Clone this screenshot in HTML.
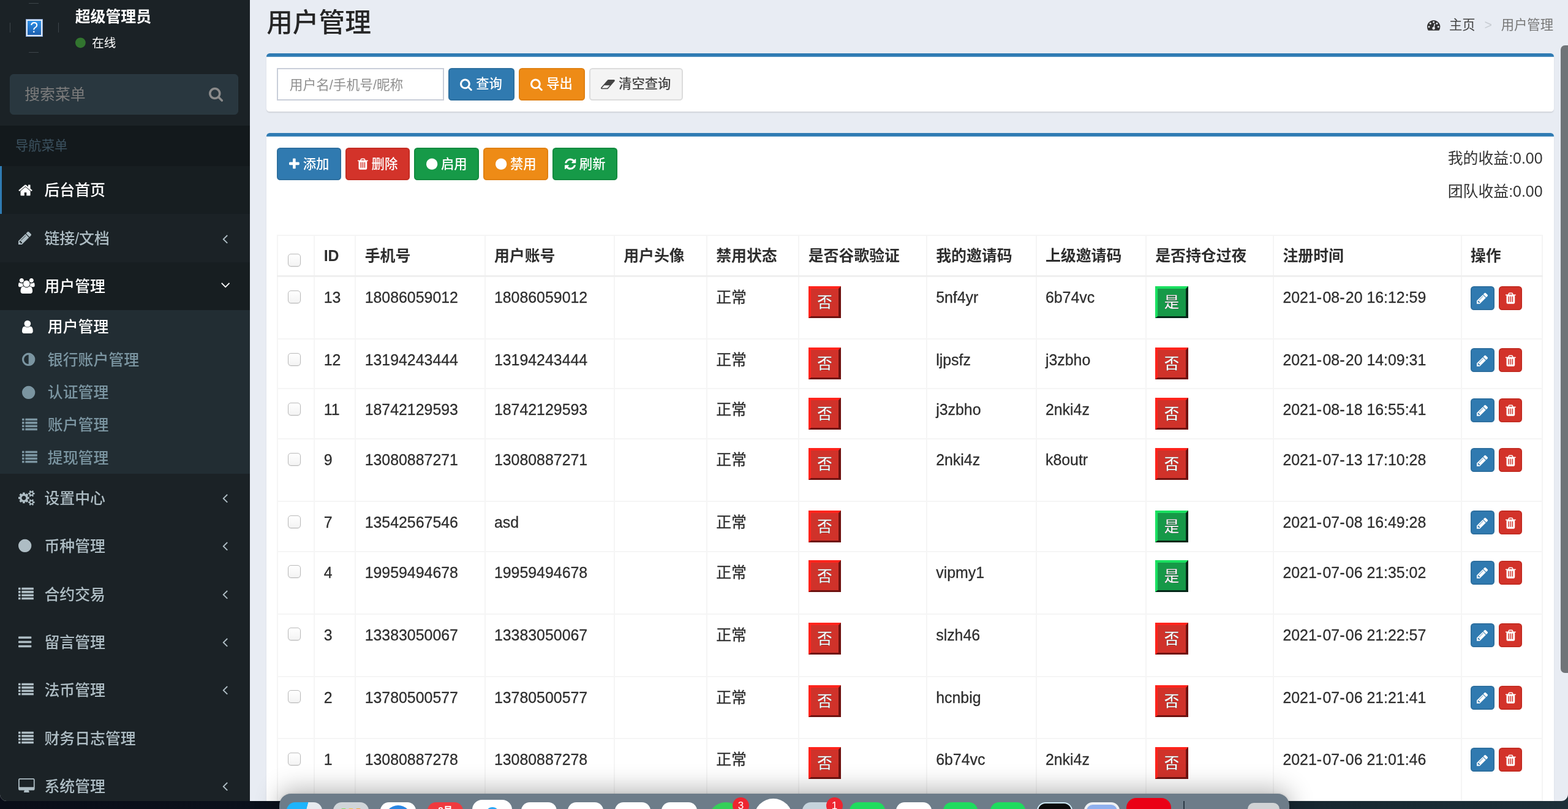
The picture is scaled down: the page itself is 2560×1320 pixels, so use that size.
<!DOCTYPE html>
<html lang="zh-CN"><head><meta charset="utf-8"><title>用户管理</title>
<style>
*{box-sizing:border-box}
html,body{margin:0;padding:0}
body{width:2560px;height:1320px;overflow:hidden;position:relative;background:linear-gradient(90deg,#090d18 0,#0b111c 18%,#16252e 80%,#1d3039 100%);font-family:"Liberation Sans","Noto Sans CJK SC",sans-serif;font-size:24.89px;line-height:35.56px;color:#333}
svg.fa{display:inline-block;fill:currentColor;overflow:visible}
ul{list-style:none;margin:0;padding:0}
a{text-decoration:none;color:inherit}
#win{will-change:transform;position:absolute;left:0;top:0;width:2560px;height:1307px;overflow:hidden;border-radius:0 0 11px 11px;background:#e8ecf3}
/* ---------- sidebar ---------- */
#sb{position:absolute;left:-1.7px;top:-12.2px;width:409.7px;height:1400px;background:#1b2226;color:#aebdc4}
.up{position:relative;height:115.56px}
.up .frag{position:absolute;background:#3d454a}
.up .qm{position:absolute;left:43.4px;top:43.3px;width:28px;height:29px;border:3px solid #dfe8f4;outline:1px solid #7f9fd0;outline-offset:-1px;background:linear-gradient(#2c8fe6,#1c5fb0);color:#fff;font:normal 23px/23px "Liberation Sans",sans-serif;text-align:center}
.up .nm{position:absolute;left:124.44px;top:27.4px;font-weight:700;font-size:24.89px;line-height:24.89px;color:#fff;white-space:nowrap}
.up .st{position:absolute;left:124.44px;top:71.9px;font-size:19.56px;line-height:19.56px;color:#fff;white-space:nowrap}
.up .st svg{fill:#32752f;margin-right:5.33px}
.sf{position:absolute;left:17.78px;top:133.33px;width:373.33px;height:65.78px;border-radius:6.04px;background:#29373f;border:1.78px solid #2b3a42}
.sf .ph{position:absolute;left:23.11px;top:15.1px;font-size:24.89px;line-height:35.56px;color:#7c7c7c}
.sf svg{position:absolute;right:24.00px;top:18.67px;fill:#8b8b8b}
.nh{position:absolute;left:0;top:217.00px;width:100%;height:66.03px;background:#13191c;color:#3c5260;font-size:21.33px;line-height:30.47px;padding:17.78px 44.44px 17.78px 26.67px}
.menu{position:absolute;left:0;top:283.02px;width:100%}
.menu>li>a{display:block;position:relative;height:78.35px;padding:21.33px 8.89px 21.33px 26.67px;border-left:5.33px solid transparent;font-size:24.89px;line-height:35.56px;white-space:nowrap}
.menu>li>a .ic{display:inline-block;width:35.56px}
.menu>li>a .ar{position:absolute;right:36.09px;top:27.38px;line-height:24.89px}
.menu>li>a .ar.dn{transform:rotate(-90deg);top:25.96px}
.menu .t{position:relative;top:2.0px;font-weight:500}
.menu .ic{position:relative;top:1.6px}
.menu>li.act>a{background:#171e21;color:#fff;border-left-color:#2f7bb3}
.menu>li.open>a{background:#171e21;color:#fff}
.menu .sub{background:#222d33;padding-left:8.89px}
.menu .sub a{display:block;height:53.33px;padding:8.89px 8.89px 8.89px 28.2px;font-size:24.89px;line-height:35.56px;color:#7b95a1;white-space:nowrap}
.menu>li:nth-child(-n+3)>a>.t{top:1.3px}
.menu>li:nth-child(-n+3)>a>.ic{top:0.8px}
.menu .sub a .ic{display:inline-block;width:35.56px;left:0.8px}
.menu .sub .t{top:1.5px}
.menu .sub li.act a{color:#fff}
/* ---------- main ---------- */
#main{position:absolute;left:0;top:0;width:2560px;height:1320px}
h1{position:absolute;left:435.2px;top:14.33px;margin:0;font-size:42.67px;line-height:46.93px;font-weight:500;color:#262626;white-space:nowrap}
.bc{position:absolute;right:24px;top:24.4px;font-size:21.33px;line-height:35.56px;color:#777;white-space:nowrap}
.bc .h{color:#444}
.bc .sep{color:#c8cdd3;padding:0 8.89px}
.bc svg{fill:#333}
.box{position:absolute;left:434.6px;width:2102.7px;background:linear-gradient(#2f7bb3 0,#2f7bb3 5.3px,#fff 6.1px);padding-top:5.33px;border-radius:5.33px;box-shadow:0 1.78px 1.78px rgba(0,0,0,.1)}
#b1{top:87.4px;height:94.4px}
#b2{top:217.4px;height:1200px}
.bb{padding:17.9px 17.78px 17.78px 17.78px;white-space:nowrap}
.inp{display:inline-block;vertical-align:middle;width:272.6px;height:53.3px;border:2px solid #c9ced9;padding:9.9px 0 0 18.4px;font-size:21.69px;line-height:32.00px;color:#8f8f8f;background:#fff;white-space:nowrap}
.btn{display:inline-block;vertical-align:middle;overflow:visible;border:2px solid transparent;border-radius:5.33px;color:#fff;text-align:center;white-space:nowrap}
.btn.sm{height:53px;padding:8.2px 0 0 17.6px;font-size:21.33px;line-height:32.00px;text-align:left}
.btn .t{position:relative;top:0.3px;font-weight:500}
.btn svg{position:relative;top:1.2px}
.btn.xs{height:39px;padding:1.6px 0 0 0;font-size:21.33px;line-height:32.00px;text-align:center}
.btn.primary{background:#307ab0;border-color:#2d6f9f}
.btn.warning{background:#ee8b16;border-color:#e08012}
.btn.danger{background:#d3332a;border-color:#c42c22}
.btn.success{background:#169a48;border-color:#128a3f}
.btn.default{background:#f4f4f4;border-color:#dcdcdc;color:#444}
.tb{position:absolute;left:17.78px;top:23.7px;white-space:nowrap}
.inc{position:absolute;right:18.8px;top:23.9px;text-align:right;font-size:24.89px;line-height:35.56px;color:#333}
.inc p{margin:0 0 18px}
table{position:absolute;left:17.9px;top:166px;border-collapse:collapse;table-layout:fixed;width:2067px}
th,td{border:2px solid #f5f5f5;padding:0 14.22px;vertical-align:top;text-align:left;font-size:24.89px;line-height:35.56px;white-space:nowrap;overflow:hidden}
th{font-weight:700;color:#2e2e2e;padding-top:14.9px}
thead tr{height:66.5px}
thead th{border-bottom:3px solid #efefef}
td{padding-top:16.0px;color:#2e2e2e;-webkit-text-stroke:0.3px #2e2e2e}
tr.rt{height:102px}
tr.rs{height:81.6px}
tr.rt2{height:101.2px}
.cb{display:inline-block;width:21px;height:21px;border:1.5px solid #b9b9b9;border-radius:5px;background:linear-gradient(#fff,#f3f3f3);vertical-align:top;margin:5.7px 0 0 0.8px;box-shadow:0 1px 1px rgba(0,0,0,.08)}
.nb{display:inline-block;vertical-align:top;width:53.4px;height:52px;margin:-2.5px 0 0 0;padding:0;border-style:solid;border-width:4px 4px 3px 4px;font:inherit;font-weight:500;font-size:24.89px;line-height:41px;color:#fff;text-align:center}
.nb.no{background:#d0322a;border-color:#ff241c #6e1210 #6e1210 #ff241c}
.nb.yes{background:#169948;border-color:#1ae060 #042818 #042818 #1ae060}
td.op{padding-top:14.2px}
th .cb{margin-top:13.4px}
tbody tr:first-child td{padding-top:15.5px}
tbody tr:first-child td.op{padding-top:14.4px}
tbody tr:first-child .nb{margin-top:-1.4px}
tbody tr:first-child .cb{margin-top:5.7px}
.hy{letter-spacing:1.4px}
/* ---------- scroll bar + dock ---------- */
#scr{position:absolute;left:2548px;top:74px;width:14px;height:1024px;border-radius:7px 0 0 7px;background:#707478}
#glow{display:none}
#dock{position:absolute;left:456px;top:1295px;width:1649px;height:60px;border-radius:19px;background:#6d7c89;box-shadow:0 -6px 40px rgba(0,0,0,.30),0 0 5px rgba(0,0,0,.12)}
#dock i{position:absolute;display:block;border-radius:14px 14px 0 0}
#dock b{position:absolute;display:block;width:27px;height:27px;border-radius:50%;background:#ee2530;color:#fff;font:normal 17px/27px "Liberation Sans",sans-serif;text-align:center}

</style></head>
<body>
<div id="win">
<div id="main">
  <h1>用户管理</h1>
  <div class="bc"><svg class="fa" style="width:21.33px;height:21.33px;vertical-align:-3.05px;" viewBox="0 -1536 1792 1792" aria-hidden="true"><path transform="scale(1,-1)" d="M384 384q0 53 -37.5 90.5t-90.5 37.5t-90.5 -37.5t-37.5 -90.5t37.5 -90.5t90.5 -37.5t90.5 37.5t37.5 90.5zM576 832q0 53 -37.5 90.5t-90.5 37.5t-90.5 -37.5t-37.5 -90.5t37.5 -90.5t90.5 -37.5t90.5 37.5t37.5 90.5zM1004 351l101 382q6 26 -7.5 48.5t-38.5 29.5 t-48 -6.5t-30 -39.5l-101 -382q-60 -5 -107 -43.5t-63 -98.5q-20 -77 20 -146t117 -89t146 20t89 117q16 60 -6 117t-72 91zM1664 384q0 53 -37.5 90.5t-90.5 37.5t-90.5 -37.5t-37.5 -90.5t37.5 -90.5t90.5 -37.5t90.5 37.5t37.5 90.5zM1024 1024q0 53 -37.5 90.5 t-90.5 37.5t-90.5 -37.5t-37.5 -90.5t37.5 -90.5t90.5 -37.5t90.5 37.5t37.5 90.5zM1472 832q0 53 -37.5 90.5t-90.5 37.5t-90.5 -37.5t-37.5 -90.5t37.5 -90.5t90.5 -37.5t90.5 37.5t37.5 90.5zM1792 384q0 -261 -141 -483q-19 -29 -54 -29h-1402q-35 0 -54 29 q-141 221 -141 483q0 182 71 348t191 286t286 191t348 71t348 -71t286 -191t191 -286t71 -348z"/></svg><span class="h" style="margin-left:14.22px">主页</span> <span class="sep">&gt;&nbsp;</span>用户管理</div>
  <div class="box" id="b1"><div class="bb">
    <span class="inp">用户名/手机号/昵称</span>
    <a class="btn sm primary" style="width:108px"><svg class="fa" style="width:19.81px;height:21.33px;vertical-align:-3.05px;" viewBox="0 -1536 1664 1792" aria-hidden="true"><path transform="scale(1,-1)" d="M1152 704q0 185 -131.5 316.5t-316.5 131.5t-316.5 -131.5t-131.5 -316.5t131.5 -316.5t316.5 -131.5t316.5 131.5t131.5 316.5zM1664 -128q0 -52 -38 -90t-90 -38q-54 0 -90 38l-343 342q-179 -124 -399 -124q-143 0 -273.5 55.5t-225 150t-150 225t-55.5 273.5 t55.5 273.5t150 225t225 150t273.5 55.5t273.5 -55.5t225 -150t150 -225t55.5 -273.5q0 -220 -124 -399l343 -343q37 -37 37 -90z"/></svg> <span class="t">查询</span></a>
    <a class="btn sm warning" style="width:108px"><svg class="fa" style="width:19.81px;height:21.33px;vertical-align:-3.05px;" viewBox="0 -1536 1664 1792" aria-hidden="true"><path transform="scale(1,-1)" d="M1152 704q0 185 -131.5 316.5t-316.5 131.5t-316.5 -131.5t-131.5 -316.5t131.5 -316.5t316.5 -131.5t316.5 131.5t131.5 316.5zM1664 -128q0 -52 -38 -90t-90 -38q-54 0 -90 38l-343 342q-179 -124 -399 -124q-143 0 -273.5 55.5t-225 150t-150 225t-55.5 273.5 t55.5 273.5t150 225t225 150t273.5 55.5t273.5 -55.5t225 -150t150 -225t55.5 -273.5q0 -220 -124 -399l343 -343q37 -37 37 -90z"/></svg> <span class="t">导出</span></a>
    <a class="btn sm default" style="width:153.3px"><svg class="fa" style="width:22.86px;height:21.33px;vertical-align:-3.05px;" viewBox="0 -1536 1920 1792" aria-hidden="true"><path transform="scale(1,-1)" d="M896 128l336 384h-768l-336 -384h768zM1909 1205q15 -34 9.5 -71.5t-30.5 -65.5l-896 -1024q-38 -44 -96 -44h-768q-38 0 -69.5 20.5t-47.5 54.5q-15 34 -9.5 71.5t30.5 65.5l896 1024q38 44 96 44h768q38 0 69.5 -20.5t47.5 -54.5z"/></svg> <span class="t">清空查询</span></a>
  </div></div>
  <div class="box" id="b2">
    <div class="tb">
    <a class="btn sm primary" style="width:105px"><svg class="fa" style="width:16.76px;height:21.33px;vertical-align:-3.05px;" viewBox="0 -1536 1408 1792" aria-hidden="true"><path transform="scale(1,-1)" d="M1408 800v-192q0 -40 -28 -68t-68 -28h-416v-416q0 -40 -28 -68t-68 -28h-192q-40 0 -68 28t-28 68v416h-416q-40 0 -68 28t-28 68v192q0 40 28 68t68 28h416v416q0 40 28 68t68 28h192q40 0 68 -28t28 -68v-416h416q40 0 68 -28t28 -68z"/></svg> <span class="t">添加</span></a>
    <a class="btn sm danger" style="width:105px"><svg class="fa" style="width:16.76px;height:21.33px;vertical-align:-3.05px;" viewBox="0 -1536 1408 1792" aria-hidden="true"><path transform="scale(1,-1)" d="M512 160v704q0 14 -9 23t-23 9h-64q-14 0 -23 -9t-9 -23v-704q0 -14 9 -23t23 -9h64q14 0 23 9t9 23zM768 160v704q0 14 -9 23t-23 9h-64q-14 0 -23 -9t-9 -23v-704q0 -14 9 -23t23 -9h64q14 0 23 9t9 23zM1024 160v704q0 14 -9 23t-23 9h-64q-14 0 -23 -9t-9 -23v-704 q0 -14 9 -23t23 -9h64q14 0 23 9t9 23zM480 1152h448l-48 117q-7 9 -17 11h-317q-10 -2 -17 -11zM1408 1120v-64q0 -14 -9 -23t-23 -9h-96v-948q0 -83 -47 -143.5t-113 -60.5h-832q-66 0 -113 58.5t-47 141.5v952h-96q-14 0 -23 9t-9 23v64q0 14 9 23t23 9h309l70 167 q15 37 54 63t79 26h320q40 0 79 -26t54 -63l70 -167h309q14 0 23 -9t9 -23z"/></svg> <span class="t">删除</span></a>
    <a class="btn sm success" style="width:106px"><svg class="fa" style="width:18.29px;height:21.33px;vertical-align:-3.05px;" viewBox="0 -1536 1536 1792" aria-hidden="true"><path transform="scale(1,-1)" d="M1536 640q0 -209 -103 -385.5t-279.5 -279.5t-385.5 -103t-385.5 103t-279.5 279.5t-103 385.5t103 385.5t279.5 279.5t385.5 103t385.5 -103t279.5 -279.5t103 -385.5z"/></svg> <span class="t">启用</span></a>
    <a class="btn sm warning" style="width:106px"><svg class="fa" style="width:18.29px;height:21.33px;vertical-align:-3.05px;" viewBox="0 -1536 1536 1792" aria-hidden="true"><path transform="scale(1,-1)" d="M1536 640q0 -209 -103 -385.5t-279.5 -279.5t-385.5 -103t-385.5 103t-279.5 279.5t-103 385.5t103 385.5t279.5 279.5t385.5 103t385.5 -103t279.5 -279.5t103 -385.5z"/></svg> <span class="t">禁用</span></a>
    <a class="btn sm success" style="width:105.6px"><svg class="fa" style="width:18.29px;height:21.33px;vertical-align:-3.05px;" viewBox="0 -1536 1536 1792" aria-hidden="true"><path transform="scale(1,-1)" d="M1511 480q0 -5 -1 -7q-64 -268 -268 -434.5t-478 -166.5q-146 0 -282.5 55t-243.5 157l-129 -129q-19 -19 -45 -19t-45 19t-19 45v448q0 26 19 45t45 19h448q26 0 45 -19t19 -45t-19 -45l-137 -137q71 -66 161 -102t187 -36q134 0 250 65t186 179q11 17 53 117 q8 23 30 23h192q13 0 22.5 -9.5t9.5 -22.5zM1536 1280v-448q0 -26 -19 -45t-45 -19h-448q-26 0 -45 19t-19 45t19 45l138 138q-148 137 -349 137q-134 0 -250 -65t-186 -179q-11 -17 -53 -117q-8 -23 -30 -23h-199q-13 0 -22.5 9.5t-9.5 22.5v7q65 268 270 434.5t480 166.5 q146 0 284 -55.5t245 -156.5l130 129q19 19 45 19t45 -19t19 -45z"/></svg> <span class="t">刷新</span></a>
    </div>
    <div class="inc"><p>我的收益:0.00</p><p>团队收益:0.00</p></div>
    <table>
      <colgroup><col style="width:60px"><col style="width:67px"><col style="width:211.25px"><col style="width:211.25px"><col style="width:151px"><col style="width:150.5px"><col style="width:208.5px"><col style="width:178.75px"><col style="width:179.25px"><col style="width:208.25px"><col style="width:306.5px"><col style="width:132.75px"></colgroup>
      <thead><tr><th><span class="cb"></span></th><th>ID</th><th>手机号</th><th>用户账号</th><th>用户头像</th><th>禁用状态</th><th>是否谷歌验证</th><th>我的邀请码</th><th>上级邀请码</th><th>是否持仓过夜</th><th>注册时间</th><th>操作</th></tr></thead>
      <tbody>
<tr class="rt"><td><span class="cb"></span></td><td>13</td><td>18086059012</td><td>18086059012</td><td></td><td>正常</td><td><button class="nb no">否</button></td><td>5nf4yr</td><td>6b74vc</td><td><button class="nb yes">是</button></td><td>2021<span class="hy">-</span>08<span class="hy">-</span>20 16:12:59</td><td class="op"><a class="btn xs primary" style="width:39.2px"><svg class="fa" style="width:18.29px;height:21.33px;vertical-align:-3.05px;" viewBox="0 -1536 1536 1792" aria-hidden="true"><path transform="scale(1,-1)" d="M363 0l91 91l-235 235l-91 -91v-107h128v-128h107zM886 928q0 22 -22 22q-10 0 -17 -7l-542 -542q-7 -7 -7 -17q0 -22 22 -22q10 0 17 7l542 542q7 7 7 17zM832 1120l416 -416l-832 -832h-416v416zM1515 1024q0 -53 -37 -90l-166 -166l-416 416l166 165q36 38 90 38 q53 0 91 -38l235 -234q37 -39 37 -91z"/></svg></a> <a class="btn xs danger" style="width:38.2px"><svg class="fa" style="width:16.76px;height:21.33px;vertical-align:-3.05px;" viewBox="0 -1536 1408 1792" aria-hidden="true"><path transform="scale(1,-1)" d="M512 160v704q0 14 -9 23t-23 9h-64q-14 0 -23 -9t-9 -23v-704q0 -14 9 -23t23 -9h64q14 0 23 9t9 23zM768 160v704q0 14 -9 23t-23 9h-64q-14 0 -23 -9t-9 -23v-704q0 -14 9 -23t23 -9h64q14 0 23 9t9 23zM1024 160v704q0 14 -9 23t-23 9h-64q-14 0 -23 -9t-9 -23v-704 q0 -14 9 -23t23 -9h64q14 0 23 9t9 23zM480 1152h448l-48 117q-7 9 -17 11h-317q-10 -2 -17 -11zM1408 1120v-64q0 -14 -9 -23t-23 -9h-96v-948q0 -83 -47 -143.5t-113 -60.5h-832q-66 0 -113 58.5t-47 141.5v952h-96q-14 0 -23 9t-9 23v64q0 14 9 23t23 9h309l70 167 q15 37 54 63t79 26h320q40 0 79 -26t54 -63l70 -167h309q14 0 23 -9t9 -23z"/></svg></a></td></tr>
<tr class="rs"><td><span class="cb"></span></td><td>12</td><td>13194243444</td><td>13194243444</td><td></td><td>正常</td><td><button class="nb no">否</button></td><td>ljpsfz</td><td>j3zbho</td><td><button class="nb no">否</button></td><td>2021<span class="hy">-</span>08<span class="hy">-</span>20 14:09:31</td><td class="op"><a class="btn xs primary" style="width:39.2px"><svg class="fa" style="width:18.29px;height:21.33px;vertical-align:-3.05px;" viewBox="0 -1536 1536 1792" aria-hidden="true"><path transform="scale(1,-1)" d="M363 0l91 91l-235 235l-91 -91v-107h128v-128h107zM886 928q0 22 -22 22q-10 0 -17 -7l-542 -542q-7 -7 -7 -17q0 -22 22 -22q10 0 17 7l542 542q7 7 7 17zM832 1120l416 -416l-832 -832h-416v416zM1515 1024q0 -53 -37 -90l-166 -166l-416 416l166 165q36 38 90 38 q53 0 91 -38l235 -234q37 -39 37 -91z"/></svg></a> <a class="btn xs danger" style="width:38.2px"><svg class="fa" style="width:16.76px;height:21.33px;vertical-align:-3.05px;" viewBox="0 -1536 1408 1792" aria-hidden="true"><path transform="scale(1,-1)" d="M512 160v704q0 14 -9 23t-23 9h-64q-14 0 -23 -9t-9 -23v-704q0 -14 9 -23t23 -9h64q14 0 23 9t9 23zM768 160v704q0 14 -9 23t-23 9h-64q-14 0 -23 -9t-9 -23v-704q0 -14 9 -23t23 -9h64q14 0 23 9t9 23zM1024 160v704q0 14 -9 23t-23 9h-64q-14 0 -23 -9t-9 -23v-704 q0 -14 9 -23t23 -9h64q14 0 23 9t9 23zM480 1152h448l-48 117q-7 9 -17 11h-317q-10 -2 -17 -11zM1408 1120v-64q0 -14 -9 -23t-23 -9h-96v-948q0 -83 -47 -143.5t-113 -60.5h-832q-66 0 -113 58.5t-47 141.5v952h-96q-14 0 -23 9t-9 23v64q0 14 9 23t23 9h309l70 167 q15 37 54 63t79 26h320q40 0 79 -26t54 -63l70 -167h309q14 0 23 -9t9 -23z"/></svg></a></td></tr>
<tr class="rs"><td><span class="cb"></span></td><td>11</td><td>18742129593</td><td>18742129593</td><td></td><td>正常</td><td><button class="nb no">否</button></td><td>j3zbho</td><td>2nki4z</td><td><button class="nb no">否</button></td><td>2021<span class="hy">-</span>08<span class="hy">-</span>18 16:55:41</td><td class="op"><a class="btn xs primary" style="width:39.2px"><svg class="fa" style="width:18.29px;height:21.33px;vertical-align:-3.05px;" viewBox="0 -1536 1536 1792" aria-hidden="true"><path transform="scale(1,-1)" d="M363 0l91 91l-235 235l-91 -91v-107h128v-128h107zM886 928q0 22 -22 22q-10 0 -17 -7l-542 -542q-7 -7 -7 -17q0 -22 22 -22q10 0 17 7l542 542q7 7 7 17zM832 1120l416 -416l-832 -832h-416v416zM1515 1024q0 -53 -37 -90l-166 -166l-416 416l166 165q36 38 90 38 q53 0 91 -38l235 -234q37 -39 37 -91z"/></svg></a> <a class="btn xs danger" style="width:38.2px"><svg class="fa" style="width:16.76px;height:21.33px;vertical-align:-3.05px;" viewBox="0 -1536 1408 1792" aria-hidden="true"><path transform="scale(1,-1)" d="M512 160v704q0 14 -9 23t-23 9h-64q-14 0 -23 -9t-9 -23v-704q0 -14 9 -23t23 -9h64q14 0 23 9t9 23zM768 160v704q0 14 -9 23t-23 9h-64q-14 0 -23 -9t-9 -23v-704q0 -14 9 -23t23 -9h64q14 0 23 9t9 23zM1024 160v704q0 14 -9 23t-23 9h-64q-14 0 -23 -9t-9 -23v-704 q0 -14 9 -23t23 -9h64q14 0 23 9t9 23zM480 1152h448l-48 117q-7 9 -17 11h-317q-10 -2 -17 -11zM1408 1120v-64q0 -14 -9 -23t-23 -9h-96v-948q0 -83 -47 -143.5t-113 -60.5h-832q-66 0 -113 58.5t-47 141.5v952h-96q-14 0 -23 9t-9 23v64q0 14 9 23t23 9h309l70 167 q15 37 54 63t79 26h320q40 0 79 -26t54 -63l70 -167h309q14 0 23 -9t9 -23z"/></svg></a></td></tr>
<tr class="rt"><td><span class="cb"></span></td><td>9</td><td>13080887271</td><td>13080887271</td><td></td><td>正常</td><td><button class="nb no">否</button></td><td>2nki4z</td><td>k8outr</td><td><button class="nb no">否</button></td><td>2021<span class="hy">-</span>07<span class="hy">-</span>13 17:10:28</td><td class="op"><a class="btn xs primary" style="width:39.2px"><svg class="fa" style="width:18.29px;height:21.33px;vertical-align:-3.05px;" viewBox="0 -1536 1536 1792" aria-hidden="true"><path transform="scale(1,-1)" d="M363 0l91 91l-235 235l-91 -91v-107h128v-128h107zM886 928q0 22 -22 22q-10 0 -17 -7l-542 -542q-7 -7 -7 -17q0 -22 22 -22q10 0 17 7l542 542q7 7 7 17zM832 1120l416 -416l-832 -832h-416v416zM1515 1024q0 -53 -37 -90l-166 -166l-416 416l166 165q36 38 90 38 q53 0 91 -38l235 -234q37 -39 37 -91z"/></svg></a> <a class="btn xs danger" style="width:38.2px"><svg class="fa" style="width:16.76px;height:21.33px;vertical-align:-3.05px;" viewBox="0 -1536 1408 1792" aria-hidden="true"><path transform="scale(1,-1)" d="M512 160v704q0 14 -9 23t-23 9h-64q-14 0 -23 -9t-9 -23v-704q0 -14 9 -23t23 -9h64q14 0 23 9t9 23zM768 160v704q0 14 -9 23t-23 9h-64q-14 0 -23 -9t-9 -23v-704q0 -14 9 -23t23 -9h64q14 0 23 9t9 23zM1024 160v704q0 14 -9 23t-23 9h-64q-14 0 -23 -9t-9 -23v-704 q0 -14 9 -23t23 -9h64q14 0 23 9t9 23zM480 1152h448l-48 117q-7 9 -17 11h-317q-10 -2 -17 -11zM1408 1120v-64q0 -14 -9 -23t-23 -9h-96v-948q0 -83 -47 -143.5t-113 -60.5h-832q-66 0 -113 58.5t-47 141.5v952h-96q-14 0 -23 9t-9 23v64q0 14 9 23t23 9h309l70 167 q15 37 54 63t79 26h320q40 0 79 -26t54 -63l70 -167h309q14 0 23 -9t9 -23z"/></svg></a></td></tr>
<tr class="rs"><td><span class="cb"></span></td><td>7</td><td>13542567546</td><td>asd</td><td></td><td>正常</td><td><button class="nb no">否</button></td><td></td><td></td><td><button class="nb yes">是</button></td><td>2021<span class="hy">-</span>07<span class="hy">-</span>08 16:49:28</td><td class="op"><a class="btn xs primary" style="width:39.2px"><svg class="fa" style="width:18.29px;height:21.33px;vertical-align:-3.05px;" viewBox="0 -1536 1536 1792" aria-hidden="true"><path transform="scale(1,-1)" d="M363 0l91 91l-235 235l-91 -91v-107h128v-128h107zM886 928q0 22 -22 22q-10 0 -17 -7l-542 -542q-7 -7 -7 -17q0 -22 22 -22q10 0 17 7l542 542q7 7 7 17zM832 1120l416 -416l-832 -832h-416v416zM1515 1024q0 -53 -37 -90l-166 -166l-416 416l166 165q36 38 90 38 q53 0 91 -38l235 -234q37 -39 37 -91z"/></svg></a> <a class="btn xs danger" style="width:38.2px"><svg class="fa" style="width:16.76px;height:21.33px;vertical-align:-3.05px;" viewBox="0 -1536 1408 1792" aria-hidden="true"><path transform="scale(1,-1)" d="M512 160v704q0 14 -9 23t-23 9h-64q-14 0 -23 -9t-9 -23v-704q0 -14 9 -23t23 -9h64q14 0 23 9t9 23zM768 160v704q0 14 -9 23t-23 9h-64q-14 0 -23 -9t-9 -23v-704q0 -14 9 -23t23 -9h64q14 0 23 9t9 23zM1024 160v704q0 14 -9 23t-23 9h-64q-14 0 -23 -9t-9 -23v-704 q0 -14 9 -23t23 -9h64q14 0 23 9t9 23zM480 1152h448l-48 117q-7 9 -17 11h-317q-10 -2 -17 -11zM1408 1120v-64q0 -14 -9 -23t-23 -9h-96v-948q0 -83 -47 -143.5t-113 -60.5h-832q-66 0 -113 58.5t-47 141.5v952h-96q-14 0 -23 9t-9 23v64q0 14 9 23t23 9h309l70 167 q15 37 54 63t79 26h320q40 0 79 -26t54 -63l70 -167h309q14 0 23 -9t9 -23z"/></svg></a></td></tr>
<tr class="rt"><td><span class="cb"></span></td><td>4</td><td>19959494678</td><td>19959494678</td><td></td><td>正常</td><td><button class="nb no">否</button></td><td>vipmy1</td><td></td><td><button class="nb yes">是</button></td><td>2021<span class="hy">-</span>07<span class="hy">-</span>06 21:35:02</td><td class="op"><a class="btn xs primary" style="width:39.2px"><svg class="fa" style="width:18.29px;height:21.33px;vertical-align:-3.05px;" viewBox="0 -1536 1536 1792" aria-hidden="true"><path transform="scale(1,-1)" d="M363 0l91 91l-235 235l-91 -91v-107h128v-128h107zM886 928q0 22 -22 22q-10 0 -17 -7l-542 -542q-7 -7 -7 -17q0 -22 22 -22q10 0 17 7l542 542q7 7 7 17zM832 1120l416 -416l-832 -832h-416v416zM1515 1024q0 -53 -37 -90l-166 -166l-416 416l166 165q36 38 90 38 q53 0 91 -38l235 -234q37 -39 37 -91z"/></svg></a> <a class="btn xs danger" style="width:38.2px"><svg class="fa" style="width:16.76px;height:21.33px;vertical-align:-3.05px;" viewBox="0 -1536 1408 1792" aria-hidden="true"><path transform="scale(1,-1)" d="M512 160v704q0 14 -9 23t-23 9h-64q-14 0 -23 -9t-9 -23v-704q0 -14 9 -23t23 -9h64q14 0 23 9t9 23zM768 160v704q0 14 -9 23t-23 9h-64q-14 0 -23 -9t-9 -23v-704q0 -14 9 -23t23 -9h64q14 0 23 9t9 23zM1024 160v704q0 14 -9 23t-23 9h-64q-14 0 -23 -9t-9 -23v-704 q0 -14 9 -23t23 -9h64q14 0 23 9t9 23zM480 1152h448l-48 117q-7 9 -17 11h-317q-10 -2 -17 -11zM1408 1120v-64q0 -14 -9 -23t-23 -9h-96v-948q0 -83 -47 -143.5t-113 -60.5h-832q-66 0 -113 58.5t-47 141.5v952h-96q-14 0 -23 9t-9 23v64q0 14 9 23t23 9h309l70 167 q15 37 54 63t79 26h320q40 0 79 -26t54 -63l70 -167h309q14 0 23 -9t9 -23z"/></svg></a></td></tr>
<tr class="rt"><td><span class="cb"></span></td><td>3</td><td>13383050067</td><td>13383050067</td><td></td><td>正常</td><td><button class="nb no">否</button></td><td>slzh46</td><td></td><td><button class="nb no">否</button></td><td>2021<span class="hy">-</span>07<span class="hy">-</span>06 21:22:57</td><td class="op"><a class="btn xs primary" style="width:39.2px"><svg class="fa" style="width:18.29px;height:21.33px;vertical-align:-3.05px;" viewBox="0 -1536 1536 1792" aria-hidden="true"><path transform="scale(1,-1)" d="M363 0l91 91l-235 235l-91 -91v-107h128v-128h107zM886 928q0 22 -22 22q-10 0 -17 -7l-542 -542q-7 -7 -7 -17q0 -22 22 -22q10 0 17 7l542 542q7 7 7 17zM832 1120l416 -416l-832 -832h-416v416zM1515 1024q0 -53 -37 -90l-166 -166l-416 416l166 165q36 38 90 38 q53 0 91 -38l235 -234q37 -39 37 -91z"/></svg></a> <a class="btn xs danger" style="width:38.2px"><svg class="fa" style="width:16.76px;height:21.33px;vertical-align:-3.05px;" viewBox="0 -1536 1408 1792" aria-hidden="true"><path transform="scale(1,-1)" d="M512 160v704q0 14 -9 23t-23 9h-64q-14 0 -23 -9t-9 -23v-704q0 -14 9 -23t23 -9h64q14 0 23 9t9 23zM768 160v704q0 14 -9 23t-23 9h-64q-14 0 -23 -9t-9 -23v-704q0 -14 9 -23t23 -9h64q14 0 23 9t9 23zM1024 160v704q0 14 -9 23t-23 9h-64q-14 0 -23 -9t-9 -23v-704 q0 -14 9 -23t23 -9h64q14 0 23 9t9 23zM480 1152h448l-48 117q-7 9 -17 11h-317q-10 -2 -17 -11zM1408 1120v-64q0 -14 -9 -23t-23 -9h-96v-948q0 -83 -47 -143.5t-113 -60.5h-832q-66 0 -113 58.5t-47 141.5v952h-96q-14 0 -23 9t-9 23v64q0 14 9 23t23 9h309l70 167 q15 37 54 63t79 26h320q40 0 79 -26t54 -63l70 -167h309q14 0 23 -9t9 -23z"/></svg></a></td></tr>
<tr class="rt2"><td><span class="cb"></span></td><td>2</td><td>13780500577</td><td>13780500577</td><td></td><td>正常</td><td><button class="nb no">否</button></td><td>hcnbig</td><td></td><td><button class="nb no">否</button></td><td>2021<span class="hy">-</span>07<span class="hy">-</span>06 21:21:41</td><td class="op"><a class="btn xs primary" style="width:39.2px"><svg class="fa" style="width:18.29px;height:21.33px;vertical-align:-3.05px;" viewBox="0 -1536 1536 1792" aria-hidden="true"><path transform="scale(1,-1)" d="M363 0l91 91l-235 235l-91 -91v-107h128v-128h107zM886 928q0 22 -22 22q-10 0 -17 -7l-542 -542q-7 -7 -7 -17q0 -22 22 -22q10 0 17 7l542 542q7 7 7 17zM832 1120l416 -416l-832 -832h-416v416zM1515 1024q0 -53 -37 -90l-166 -166l-416 416l166 165q36 38 90 38 q53 0 91 -38l235 -234q37 -39 37 -91z"/></svg></a> <a class="btn xs danger" style="width:38.2px"><svg class="fa" style="width:16.76px;height:21.33px;vertical-align:-3.05px;" viewBox="0 -1536 1408 1792" aria-hidden="true"><path transform="scale(1,-1)" d="M512 160v704q0 14 -9 23t-23 9h-64q-14 0 -23 -9t-9 -23v-704q0 -14 9 -23t23 -9h64q14 0 23 9t9 23zM768 160v704q0 14 -9 23t-23 9h-64q-14 0 -23 -9t-9 -23v-704q0 -14 9 -23t23 -9h64q14 0 23 9t9 23zM1024 160v704q0 14 -9 23t-23 9h-64q-14 0 -23 -9t-9 -23v-704 q0 -14 9 -23t23 -9h64q14 0 23 9t9 23zM480 1152h448l-48 117q-7 9 -17 11h-317q-10 -2 -17 -11zM1408 1120v-64q0 -14 -9 -23t-23 -9h-96v-948q0 -83 -47 -143.5t-113 -60.5h-832q-66 0 -113 58.5t-47 141.5v952h-96q-14 0 -23 9t-9 23v64q0 14 9 23t23 9h309l70 167 q15 37 54 63t79 26h320q40 0 79 -26t54 -63l70 -167h309q14 0 23 -9t9 -23z"/></svg></a></td></tr>
<tr class="rt"><td><span class="cb"></span></td><td>1</td><td>13080887278</td><td>13080887278</td><td></td><td>正常</td><td><button class="nb no">否</button></td><td>6b74vc</td><td>2nki4z</td><td><button class="nb no">否</button></td><td>2021<span class="hy">-</span>07<span class="hy">-</span>06 21:01:46</td><td class="op"><a class="btn xs primary" style="width:39.2px"><svg class="fa" style="width:18.29px;height:21.33px;vertical-align:-3.05px;" viewBox="0 -1536 1536 1792" aria-hidden="true"><path transform="scale(1,-1)" d="M363 0l91 91l-235 235l-91 -91v-107h128v-128h107zM886 928q0 22 -22 22q-10 0 -17 -7l-542 -542q-7 -7 -7 -17q0 -22 22 -22q10 0 17 7l542 542q7 7 7 17zM832 1120l416 -416l-832 -832h-416v416zM1515 1024q0 -53 -37 -90l-166 -166l-416 416l166 165q36 38 90 38 q53 0 91 -38l235 -234q37 -39 37 -91z"/></svg></a> <a class="btn xs danger" style="width:38.2px"><svg class="fa" style="width:16.76px;height:21.33px;vertical-align:-3.05px;" viewBox="0 -1536 1408 1792" aria-hidden="true"><path transform="scale(1,-1)" d="M512 160v704q0 14 -9 23t-23 9h-64q-14 0 -23 -9t-9 -23v-704q0 -14 9 -23t23 -9h64q14 0 23 9t9 23zM768 160v704q0 14 -9 23t-23 9h-64q-14 0 -23 -9t-9 -23v-704q0 -14 9 -23t23 -9h64q14 0 23 9t9 23zM1024 160v704q0 14 -9 23t-23 9h-64q-14 0 -23 -9t-9 -23v-704 q0 -14 9 -23t23 -9h64q14 0 23 9t9 23zM480 1152h448l-48 117q-7 9 -17 11h-317q-10 -2 -17 -11zM1408 1120v-64q0 -14 -9 -23t-23 -9h-96v-948q0 -83 -47 -143.5t-113 -60.5h-832q-66 0 -113 58.5t-47 141.5v952h-96q-14 0 -23 9t-9 23v64q0 14 9 23t23 9h309l70 167 q15 37 54 63t79 26h320q40 0 79 -26t54 -63l70 -167h309q14 0 23 -9t9 -23z"/></svg></a></td></tr>
      </tbody>
    </table>
  </div>
</div>
<div id="sb">
  <div class="up">
    <i class="frag" style="left:49px;top:17.5px;width:16px;height:1px"></i>
    <i class="frag" style="left:49px;top:97px;width:16px;height:1px"></i>
    <i class="frag" style="left:17.4px;top:49px;width:1px;height:16px"></i>
    <i class="frag" style="left:96.6px;top:49px;width:1px;height:16px"></i>
    <div class="qm">?</div>
    <div class="nm">超级管理员</div>
    <div class="st"><svg class="fa" style="width:16.76px;height:19.56px;vertical-align:-2.79px;" viewBox="0 -1536 1536 1792" aria-hidden="true"><path transform="scale(1,-1)" d="M1536 640q0 -209 -103 -385.5t-279.5 -279.5t-385.5 -103t-385.5 103t-279.5 279.5t-103 385.5t103 385.5t279.5 279.5t385.5 103t385.5 -103t279.5 -279.5t103 -385.5z"/></svg> 在线</div>
  </div>
  <div class="sf"><span class="ph">搜索菜单</span><svg class="fa" style="width:23.11px;height:24.89px;vertical-align:-3.56px;" viewBox="0 -1536 1664 1792" aria-hidden="true"><path transform="scale(1,-1)" d="M1152 704q0 185 -131.5 316.5t-316.5 131.5t-316.5 -131.5t-131.5 -316.5t131.5 -316.5t316.5 -131.5t316.5 131.5t131.5 316.5zM1664 -128q0 -52 -38 -90t-90 -38q-54 0 -90 38l-343 342q-179 -124 -399 -124q-143 0 -273.5 55.5t-225 150t-150 225t-55.5 273.5 t55.5 273.5t150 225t225 150t273.5 55.5t273.5 -55.5t225 -150t150 -225t55.5 -273.5q0 -220 -124 -399l343 -343q37 -37 37 -90z"/></svg></div>
  <div class="nh">导航菜单</div>
  <ul class="menu">
    <li class="act"><a><span class="ic"><svg class="fa" style="width:23.11px;height:24.89px;vertical-align:-3.56px;" viewBox="0 -1536 1664 1792" aria-hidden="true"><path transform="scale(1,-1)" d="M1408 544v-480q0 -26 -19 -45t-45 -19h-384v384h-256v-384h-384q-26 0 -45 19t-19 45v480q0 1 0.5 3t0.5 3l575 474l575 -474q1 -2 1 -6zM1631 613l-62 -74q-8 -9 -21 -11h-3q-13 0 -21 7l-692 577l-692 -577q-12 -8 -24 -7q-13 2 -21 11l-62 74q-8 10 -7 23.5t11 21.5 l719 599q32 26 76 26t76 -26l244 -204v195q0 14 9 23t23 9h192q14 0 23 -9t9 -23v-408l219 -182q10 -8 11 -21.5t-7 -23.5z"/></svg></span> <span class="t">后台首页</span></a></li>
    <li><a><span class="ic"><svg class="fa" style="width:21.33px;height:24.89px;vertical-align:-3.56px;" viewBox="0 -1536 1536 1792" aria-hidden="true"><path transform="scale(1,-1)" d="M363 0l91 91l-235 235l-91 -91v-107h128v-128h107zM886 928q0 22 -22 22q-10 0 -17 -7l-542 -542q-7 -7 -7 -17q0 -22 22 -22q10 0 17 7l542 542q7 7 7 17zM832 1120l416 -416l-832 -832h-416v416zM1515 1024q0 -53 -37 -90l-166 -166l-416 416l166 165q36 38 90 38 q53 0 91 -38l235 -234q37 -39 37 -91z"/></svg></span> <span class="t">链接/文档</span><span class="ar"><svg class="fa" style="width:8.89px;height:24.89px;vertical-align:-3.56px;" viewBox="0 -1536 640 1792" aria-hidden="true"><path transform="scale(1,-1)" d="M627 992q0 -13 -10 -23l-393 -393l393 -393q10 -10 10 -23t-10 -23l-50 -50q-10 -10 -23 -10t-23 10l-466 466q-10 10 -10 23t10 23l466 466q10 10 23 10t23 -10l50 -50q10 -10 10 -23z"/></svg></span></a></li>
    <li class="open"><a><span class="ic"><svg class="fa" style="width:26.67px;height:24.89px;vertical-align:-3.56px;" viewBox="0 -1536 1920 1792" aria-hidden="true"><path transform="scale(1,-1)" d="M593 640q-162 -5 -265 -128h-134q-82 0 -138 40.5t-56 118.5q0 353 124 353q6 0 43.5 -21t97.5 -42.5t119 -21.5q67 0 133 23q-5 -37 -5 -66q0 -139 81 -256zM1664 3q0 -120 -73 -189.5t-194 -69.5h-874q-121 0 -194 69.5t-73 189.5q0 53 3.5 103.5t14 109t26.5 108.5 t43 97.5t62 81t85.5 53.5t111.5 20q10 0 43 -21.5t73 -48t107 -48t135 -21.5t135 21.5t107 48t73 48t43 21.5q61 0 111.5 -20t85.5 -53.5t62 -81t43 -97.5t26.5 -108.5t14 -109t3.5 -103.5zM640 1280q0 -106 -75 -181t-181 -75t-181 75t-75 181t75 181t181 75t181 -75 t75 -181zM1344 896q0 -159 -112.5 -271.5t-271.5 -112.5t-271.5 112.5t-112.5 271.5t112.5 271.5t271.5 112.5t271.5 -112.5t112.5 -271.5zM1920 671q0 -78 -56 -118.5t-138 -40.5h-134q-103 123 -265 128q81 117 81 256q0 29 -5 66q66 -23 133 -23q59 0 119 21.5t97.5 42.5 t43.5 21q124 0 124 -353zM1792 1280q0 -106 -75 -181t-181 -75t-181 75t-75 181t75 181t181 75t181 -75t75 -181z"/></svg></span> <span class="t">用户管理</span><span class="ar dn"><svg class="fa" style="width:8.89px;height:24.89px;vertical-align:-3.56px;" viewBox="0 -1536 640 1792" aria-hidden="true"><path transform="scale(1,-1)" d="M627 992q0 -13 -10 -23l-393 -393l393 -393q10 -10 10 -23t-10 -23l-50 -50q-10 -10 -23 -10t-23 10l-466 466q-10 10 -10 23t10 23l466 466q10 10 23 10t23 -10l50 -50q10 -10 10 -23z"/></svg></span></a>
      <ul class="sub">
        <li class="act"><a><span class="ic"><svg class="fa" style="width:17.78px;height:24.89px;vertical-align:-3.56px;" viewBox="0 -1536 1280 1792" aria-hidden="true"><path transform="scale(1,-1)" d="M1280 137q0 -109 -62.5 -187t-150.5 -78h-854q-88 0 -150.5 78t-62.5 187q0 85 8.5 160.5t31.5 152t58.5 131t94 89t134.5 34.5q131 -128 313 -128t313 128q76 0 134.5 -34.5t94 -89t58.5 -131t31.5 -152t8.5 -160.5zM1024 1024q0 -159 -112.5 -271.5t-271.5 -112.5 t-271.5 112.5t-112.5 271.5t112.5 271.5t271.5 112.5t271.5 -112.5t112.5 -271.5z"/></svg></span> <span class="t">用户管理</span></a></li>
        <li><a><span class="ic"><svg class="fa" style="width:21.33px;height:24.89px;vertical-align:-3.56px;" viewBox="0 -1536 1536 1792" aria-hidden="true"><path transform="scale(1,-1)" d="M768 96v1088q-148 0 -273 -73t-198 -198t-73 -273t73 -273t198 -198t273 -73zM1536 640q0 -209 -103 -385.5t-279.5 -279.5t-385.5 -103t-385.5 103t-279.5 279.5t-103 385.5t103 385.5t279.5 279.5t385.5 103t385.5 -103t279.5 -279.5t103 -385.5z"/></svg></span> <span class="t">银行账户管理</span></a></li>
        <li><a><span class="ic"><svg class="fa" style="width:21.33px;height:24.89px;vertical-align:-3.56px;" viewBox="0 -1536 1536 1792" aria-hidden="true"><path transform="scale(1,-1)" d="M1536 640q0 -209 -103 -385.5t-279.5 -279.5t-385.5 -103t-385.5 103t-279.5 279.5t-103 385.5t103 385.5t279.5 279.5t385.5 103t385.5 -103t279.5 -279.5t103 -385.5z"/></svg></span> <span class="t">认证管理</span></a></li>
        <li><a><span class="ic"><svg class="fa" style="width:24.89px;height:24.89px;vertical-align:-3.56px;margin-left" viewBox="0 -1536 1792 1792" aria-hidden="true"><path transform="scale(1,-1)" d="M256 224v-192q0 -13 -9.5 -22.5t-22.5 -9.5h-192q-13 0 -22.5 9.5t-9.5 22.5v192q0 13 9.5 22.5t22.5 9.5h192q13 0 22.5 -9.5t9.5 -22.5zM256 608v-192q0 -13 -9.5 -22.5t-22.5 -9.5h-192q-13 0 -22.5 9.5t-9.5 22.5v192q0 13 9.5 22.5t22.5 9.5h192q13 0 22.5 -9.5 t9.5 -22.5zM256 992v-192q0 -13 -9.5 -22.5t-22.5 -9.5h-192q-13 0 -22.5 9.5t-9.5 22.5v192q0 13 9.5 22.5t22.5 9.5h192q13 0 22.5 -9.5t9.5 -22.5zM1792 224v-192q0 -13 -9.5 -22.5t-22.5 -9.5h-1344q-13 0 -22.5 9.5t-9.5 22.5v192q0 13 9.5 22.5t22.5 9.5h1344 q13 0 22.5 -9.5t9.5 -22.5zM256 1376v-192q0 -13 -9.5 -22.5t-22.5 -9.5h-192q-13 0 -22.5 9.5t-9.5 22.5v192q0 13 9.5 22.5t22.5 9.5h192q13 0 22.5 -9.5t9.5 -22.5zM1792 608v-192q0 -13 -9.5 -22.5t-22.5 -9.5h-1344q-13 0 -22.5 9.5t-9.5 22.5v192q0 13 9.5 22.5 t22.5 9.5h1344q13 0 22.5 -9.5t9.5 -22.5zM1792 992v-192q0 -13 -9.5 -22.5t-22.5 -9.5h-1344q-13 0 -22.5 9.5t-9.5 22.5v192q0 13 9.5 22.5t22.5 9.5h1344q13 0 22.5 -9.5t9.5 -22.5zM1792 1376v-192q0 -13 -9.5 -22.5t-22.5 -9.5h-1344q-13 0 -22.5 9.5t-9.5 22.5v192 q0 13 9.5 22.5t22.5 9.5h1344q13 0 22.5 -9.5t9.5 -22.5z"/></svg></span> <span class="t">账户管理</span></a></li>
        <li><a><span class="ic"><svg class="fa" style="width:24.89px;height:24.89px;vertical-align:-3.56px;margin-left" viewBox="0 -1536 1792 1792" aria-hidden="true"><path transform="scale(1,-1)" d="M256 224v-192q0 -13 -9.5 -22.5t-22.5 -9.5h-192q-13 0 -22.5 9.5t-9.5 22.5v192q0 13 9.5 22.5t22.5 9.5h192q13 0 22.5 -9.5t9.5 -22.5zM256 608v-192q0 -13 -9.5 -22.5t-22.5 -9.5h-192q-13 0 -22.5 9.5t-9.5 22.5v192q0 13 9.5 22.5t22.5 9.5h192q13 0 22.5 -9.5 t9.5 -22.5zM256 992v-192q0 -13 -9.5 -22.5t-22.5 -9.5h-192q-13 0 -22.5 9.5t-9.5 22.5v192q0 13 9.5 22.5t22.5 9.5h192q13 0 22.5 -9.5t9.5 -22.5zM1792 224v-192q0 -13 -9.5 -22.5t-22.5 -9.5h-1344q-13 0 -22.5 9.5t-9.5 22.5v192q0 13 9.5 22.5t22.5 9.5h1344 q13 0 22.5 -9.5t9.5 -22.5zM256 1376v-192q0 -13 -9.5 -22.5t-22.5 -9.5h-192q-13 0 -22.5 9.5t-9.5 22.5v192q0 13 9.5 22.5t22.5 9.5h192q13 0 22.5 -9.5t9.5 -22.5zM1792 608v-192q0 -13 -9.5 -22.5t-22.5 -9.5h-1344q-13 0 -22.5 9.5t-9.5 22.5v192q0 13 9.5 22.5 t22.5 9.5h1344q13 0 22.5 -9.5t9.5 -22.5zM1792 992v-192q0 -13 -9.5 -22.5t-22.5 -9.5h-1344q-13 0 -22.5 9.5t-9.5 22.5v192q0 13 9.5 22.5t22.5 9.5h1344q13 0 22.5 -9.5t9.5 -22.5zM1792 1376v-192q0 -13 -9.5 -22.5t-22.5 -9.5h-1344q-13 0 -22.5 9.5t-9.5 22.5v192 q0 13 9.5 22.5t22.5 9.5h1344q13 0 22.5 -9.5t9.5 -22.5z"/></svg></span> <span class="t">提现管理</span></a></li>
      </ul>
    </li>
    <li><a><span class="ic"><svg class="fa" style="width:26.67px;height:24.89px;vertical-align:-3.56px;" viewBox="0 -1536 1920 1792" aria-hidden="true"><path transform="scale(1,-1)" d="M896 640q0 106 -75 181t-181 75t-181 -75t-75 -181t75 -181t181 -75t181 75t75 181zM1664 128q0 52 -38 90t-90 38t-90 -38t-38 -90q0 -53 37.5 -90.5t90.5 -37.5t90.5 37.5t37.5 90.5zM1664 1152q0 52 -38 90t-90 38t-90 -38t-38 -90q0 -53 37.5 -90.5t90.5 -37.5 t90.5 37.5t37.5 90.5zM1280 731v-185q0 -10 -7 -19.5t-16 -10.5l-155 -24q-11 -35 -32 -76q34 -48 90 -115q7 -11 7 -20q0 -12 -7 -19q-23 -30 -82.5 -89.5t-78.5 -59.5q-11 0 -21 7l-115 90q-37 -19 -77 -31q-11 -108 -23 -155q-7 -24 -30 -24h-186q-11 0 -20 7.5t-10 17.5 l-23 153q-34 10 -75 31l-118 -89q-7 -7 -20 -7q-11 0 -21 8q-144 133 -144 160q0 9 7 19q10 14 41 53t47 61q-23 44 -35 82l-152 24q-10 1 -17 9.5t-7 19.5v185q0 10 7 19.5t16 10.5l155 24q11 35 32 76q-34 48 -90 115q-7 11 -7 20q0 12 7 20q22 30 82 89t79 59q11 0 21 -7 l115 -90q34 18 77 32q11 108 23 154q7 24 30 24h186q11 0 20 -7.5t10 -17.5l23 -153q34 -10 75 -31l118 89q8 7 20 7q11 0 21 -8q144 -133 144 -160q0 -8 -7 -19q-12 -16 -42 -54t-45 -60q23 -48 34 -82l152 -23q10 -2 17 -10.5t7 -19.5zM1920 198v-140q0 -16 -149 -31 q-12 -27 -30 -52q51 -113 51 -138q0 -4 -4 -7q-122 -71 -124 -71q-8 0 -46 47t-52 68q-20 -2 -30 -2t-30 2q-14 -21 -52 -68t-46 -47q-2 0 -124 71q-4 3 -4 7q0 25 51 138q-18 25 -30 52q-149 15 -149 31v140q0 16 149 31q13 29 30 52q-51 113 -51 138q0 4 4 7q4 2 35 20 t59 34t30 16q8 0 46 -46.5t52 -67.5q20 2 30 2t30 -2q51 71 92 112l6 2q4 0 124 -70q4 -3 4 -7q0 -25 -51 -138q17 -23 30 -52q149 -15 149 -31zM1920 1222v-140q0 -16 -149 -31q-12 -27 -30 -52q51 -113 51 -138q0 -4 -4 -7q-122 -71 -124 -71q-8 0 -46 47t-52 68 q-20 -2 -30 -2t-30 2q-14 -21 -52 -68t-46 -47q-2 0 -124 71q-4 3 -4 7q0 25 51 138q-18 25 -30 52q-149 15 -149 31v140q0 16 149 31q13 29 30 52q-51 113 -51 138q0 4 4 7q4 2 35 20t59 34t30 16q8 0 46 -46.5t52 -67.5q20 2 30 2t30 -2q51 71 92 112l6 2q4 0 124 -70 q4 -3 4 -7q0 -25 -51 -138q17 -23 30 -52q149 -15 149 -31z"/></svg></span> <span class="t">设置中心</span><span class="ar"><svg class="fa" style="width:8.89px;height:24.89px;vertical-align:-3.56px;" viewBox="0 -1536 640 1792" aria-hidden="true"><path transform="scale(1,-1)" d="M627 992q0 -13 -10 -23l-393 -393l393 -393q10 -10 10 -23t-10 -23l-50 -50q-10 -10 -23 -10t-23 10l-466 466q-10 10 -10 23t10 23l466 466q10 10 23 10t23 -10l50 -50q10 -10 10 -23z"/></svg></span></a></li>
    <li><a><span class="ic"><svg class="fa" style="width:21.33px;height:24.89px;vertical-align:-3.56px;" viewBox="0 -1536 1536 1792" aria-hidden="true"><path transform="scale(1,-1)" d="M1536 640q0 -209 -103 -385.5t-279.5 -279.5t-385.5 -103t-385.5 103t-279.5 279.5t-103 385.5t103 385.5t279.5 279.5t385.5 103t385.5 -103t279.5 -279.5t103 -385.5z"/></svg></span> <span class="t">币种管理</span><span class="ar"><svg class="fa" style="width:8.89px;height:24.89px;vertical-align:-3.56px;" viewBox="0 -1536 640 1792" aria-hidden="true"><path transform="scale(1,-1)" d="M627 992q0 -13 -10 -23l-393 -393l393 -393q10 -10 10 -23t-10 -23l-50 -50q-10 -10 -23 -10t-23 10l-466 466q-10 10 -10 23t10 23l466 466q10 10 23 10t23 -10l50 -50q10 -10 10 -23z"/></svg></span></a></li>
    <li><a><span class="ic"><svg class="fa" style="width:24.89px;height:24.89px;vertical-align:-3.56px;margin-left" viewBox="0 -1536 1792 1792" aria-hidden="true"><path transform="scale(1,-1)" d="M256 224v-192q0 -13 -9.5 -22.5t-22.5 -9.5h-192q-13 0 -22.5 9.5t-9.5 22.5v192q0 13 9.5 22.5t22.5 9.5h192q13 0 22.5 -9.5t9.5 -22.5zM256 608v-192q0 -13 -9.5 -22.5t-22.5 -9.5h-192q-13 0 -22.5 9.5t-9.5 22.5v192q0 13 9.5 22.5t22.5 9.5h192q13 0 22.5 -9.5 t9.5 -22.5zM256 992v-192q0 -13 -9.5 -22.5t-22.5 -9.5h-192q-13 0 -22.5 9.5t-9.5 22.5v192q0 13 9.5 22.5t22.5 9.5h192q13 0 22.5 -9.5t9.5 -22.5zM1792 224v-192q0 -13 -9.5 -22.5t-22.5 -9.5h-1344q-13 0 -22.5 9.5t-9.5 22.5v192q0 13 9.5 22.5t22.5 9.5h1344 q13 0 22.5 -9.5t9.5 -22.5zM256 1376v-192q0 -13 -9.5 -22.5t-22.5 -9.5h-192q-13 0 -22.5 9.5t-9.5 22.5v192q0 13 9.5 22.5t22.5 9.5h192q13 0 22.5 -9.5t9.5 -22.5zM1792 608v-192q0 -13 -9.5 -22.5t-22.5 -9.5h-1344q-13 0 -22.5 9.5t-9.5 22.5v192q0 13 9.5 22.5 t22.5 9.5h1344q13 0 22.5 -9.5t9.5 -22.5zM1792 992v-192q0 -13 -9.5 -22.5t-22.5 -9.5h-1344q-13 0 -22.5 9.5t-9.5 22.5v192q0 13 9.5 22.5t22.5 9.5h1344q13 0 22.5 -9.5t9.5 -22.5zM1792 1376v-192q0 -13 -9.5 -22.5t-22.5 -9.5h-1344q-13 0 -22.5 9.5t-9.5 22.5v192 q0 13 9.5 22.5t22.5 9.5h1344q13 0 22.5 -9.5t9.5 -22.5z"/></svg></span> <span class="t">合约交易</span><span class="ar"><svg class="fa" style="width:8.89px;height:24.89px;vertical-align:-3.56px;" viewBox="0 -1536 640 1792" aria-hidden="true"><path transform="scale(1,-1)" d="M627 992q0 -13 -10 -23l-393 -393l393 -393q10 -10 10 -23t-10 -23l-50 -50q-10 -10 -23 -10t-23 10l-466 466q-10 10 -10 23t10 23l466 466q10 10 23 10t23 -10l50 -50q10 -10 10 -23z"/></svg></span></a></li>
    <li><a><span class="ic"><svg class="fa" style="width:21.33px;height:24.89px;vertical-align:-3.56px;" viewBox="0 -1536 1536 1792" aria-hidden="true"><path transform="scale(1,-1)" d="M1536 192v-128q0 -26 -19 -45t-45 -19h-1408q-26 0 -45 19t-19 45v128q0 26 19 45t45 19h1408q26 0 45 -19t19 -45zM1536 704v-128q0 -26 -19 -45t-45 -19h-1408q-26 0 -45 19t-19 45v128q0 26 19 45t45 19h1408q26 0 45 -19t19 -45zM1536 1216v-128q0 -26 -19 -45 t-45 -19h-1408q-26 0 -45 19t-19 45v128q0 26 19 45t45 19h1408q26 0 45 -19t19 -45z"/></svg></span> <span class="t">留言管理</span><span class="ar"><svg class="fa" style="width:8.89px;height:24.89px;vertical-align:-3.56px;" viewBox="0 -1536 640 1792" aria-hidden="true"><path transform="scale(1,-1)" d="M627 992q0 -13 -10 -23l-393 -393l393 -393q10 -10 10 -23t-10 -23l-50 -50q-10 -10 -23 -10t-23 10l-466 466q-10 10 -10 23t10 23l466 466q10 10 23 10t23 -10l50 -50q10 -10 10 -23z"/></svg></span></a></li>
    <li><a><span class="ic"><svg class="fa" style="width:24.89px;height:24.89px;vertical-align:-3.56px;margin-left" viewBox="0 -1536 1792 1792" aria-hidden="true"><path transform="scale(1,-1)" d="M256 224v-192q0 -13 -9.5 -22.5t-22.5 -9.5h-192q-13 0 -22.5 9.5t-9.5 22.5v192q0 13 9.5 22.5t22.5 9.5h192q13 0 22.5 -9.5t9.5 -22.5zM256 608v-192q0 -13 -9.5 -22.5t-22.5 -9.5h-192q-13 0 -22.5 9.5t-9.5 22.5v192q0 13 9.5 22.5t22.5 9.5h192q13 0 22.5 -9.5 t9.5 -22.5zM256 992v-192q0 -13 -9.5 -22.5t-22.5 -9.5h-192q-13 0 -22.5 9.5t-9.5 22.5v192q0 13 9.5 22.5t22.5 9.5h192q13 0 22.5 -9.5t9.5 -22.5zM1792 224v-192q0 -13 -9.5 -22.5t-22.5 -9.5h-1344q-13 0 -22.5 9.5t-9.5 22.5v192q0 13 9.5 22.5t22.5 9.5h1344 q13 0 22.5 -9.5t9.5 -22.5zM256 1376v-192q0 -13 -9.5 -22.5t-22.5 -9.5h-192q-13 0 -22.5 9.5t-9.5 22.5v192q0 13 9.5 22.5t22.5 9.5h192q13 0 22.5 -9.5t9.5 -22.5zM1792 608v-192q0 -13 -9.5 -22.5t-22.5 -9.5h-1344q-13 0 -22.5 9.5t-9.5 22.5v192q0 13 9.5 22.5 t22.5 9.5h1344q13 0 22.5 -9.5t9.5 -22.5zM1792 992v-192q0 -13 -9.5 -22.5t-22.5 -9.5h-1344q-13 0 -22.5 9.5t-9.5 22.5v192q0 13 9.5 22.5t22.5 9.5h1344q13 0 22.5 -9.5t9.5 -22.5zM1792 1376v-192q0 -13 -9.5 -22.5t-22.5 -9.5h-1344q-13 0 -22.5 9.5t-9.5 22.5v192 q0 13 9.5 22.5t22.5 9.5h1344q13 0 22.5 -9.5t9.5 -22.5z"/></svg></span> <span class="t">法币管理</span><span class="ar"><svg class="fa" style="width:8.89px;height:24.89px;vertical-align:-3.56px;" viewBox="0 -1536 640 1792" aria-hidden="true"><path transform="scale(1,-1)" d="M627 992q0 -13 -10 -23l-393 -393l393 -393q10 -10 10 -23t-10 -23l-50 -50q-10 -10 -23 -10t-23 10l-466 466q-10 10 -10 23t10 23l466 466q10 10 23 10t23 -10l50 -50q10 -10 10 -23z"/></svg></span></a></li>
    <li><a><span class="ic"><svg class="fa" style="width:24.89px;height:24.89px;vertical-align:-3.56px;margin-left" viewBox="0 -1536 1792 1792" aria-hidden="true"><path transform="scale(1,-1)" d="M256 224v-192q0 -13 -9.5 -22.5t-22.5 -9.5h-192q-13 0 -22.5 9.5t-9.5 22.5v192q0 13 9.5 22.5t22.5 9.5h192q13 0 22.5 -9.5t9.5 -22.5zM256 608v-192q0 -13 -9.5 -22.5t-22.5 -9.5h-192q-13 0 -22.5 9.5t-9.5 22.5v192q0 13 9.5 22.5t22.5 9.5h192q13 0 22.5 -9.5 t9.5 -22.5zM256 992v-192q0 -13 -9.5 -22.5t-22.5 -9.5h-192q-13 0 -22.5 9.5t-9.5 22.5v192q0 13 9.5 22.5t22.5 9.5h192q13 0 22.5 -9.5t9.5 -22.5zM1792 224v-192q0 -13 -9.5 -22.5t-22.5 -9.5h-1344q-13 0 -22.5 9.5t-9.5 22.5v192q0 13 9.5 22.5t22.5 9.5h1344 q13 0 22.5 -9.5t9.5 -22.5zM256 1376v-192q0 -13 -9.5 -22.5t-22.5 -9.5h-192q-13 0 -22.5 9.5t-9.5 22.5v192q0 13 9.5 22.5t22.5 9.5h192q13 0 22.5 -9.5t9.5 -22.5zM1792 608v-192q0 -13 -9.5 -22.5t-22.5 -9.5h-1344q-13 0 -22.5 9.5t-9.5 22.5v192q0 13 9.5 22.5 t22.5 9.5h1344q13 0 22.5 -9.5t9.5 -22.5zM1792 992v-192q0 -13 -9.5 -22.5t-22.5 -9.5h-1344q-13 0 -22.5 9.5t-9.5 22.5v192q0 13 9.5 22.5t22.5 9.5h1344q13 0 22.5 -9.5t9.5 -22.5zM1792 1376v-192q0 -13 -9.5 -22.5t-22.5 -9.5h-1344q-13 0 -22.5 9.5t-9.5 22.5v192 q0 13 9.5 22.5t22.5 9.5h1344q13 0 22.5 -9.5t9.5 -22.5z"/></svg></span> <span class="t">财务日志管理</span></a></li>
    <li><a><span class="ic"><svg class="fa" style="width:26.67px;height:24.89px;vertical-align:-3.56px;margin-left" viewBox="0 -1536 1920 1792" aria-hidden="true"><path transform="scale(1,-1)" d="M1792 544v832q0 13 -9.5 22.5t-22.5 9.5h-1600q-13 0 -22.5 -9.5t-9.5 -22.5v-832q0 -13 9.5 -22.5t22.5 -9.5h1600q13 0 22.5 9.5t9.5 22.5zM1920 1376v-1088q0 -66 -47 -113t-113 -47h-544q0 -37 16 -77.5t32 -71t16 -43.5q0 -26 -19 -45t-45 -19h-512q-26 0 -45 19 t-19 45q0 14 16 44t32 70t16 78h-544q-66 0 -113 47t-47 113v1088q0 66 47 113t113 47h1600q66 0 113 -47t47 -113z"/></svg></span> <span class="t">系统管理</span><span class="ar"><svg class="fa" style="width:8.89px;height:24.89px;vertical-align:-3.56px;" viewBox="0 -1536 640 1792" aria-hidden="true"><path transform="scale(1,-1)" d="M627 992q0 -13 -10 -23l-393 -393l393 -393q10 -10 10 -23t-10 -23l-50 -50q-10 -10 -23 -10t-23 10l-466 466q-10 10 -10 23t10 23l466 466q10 10 23 10t23 -10l50 -50q10 -10 10 -23z"/></svg></span></a></li>
  </ul>
</div>
<div id="scr"></div>
</div>
<div id="glow"></div>
<div id="dock">
  <i style="left:12px;top:14px;width:58px;height:50px;background:linear-gradient(105deg,#1eb4fc 0 49%,#e6eaee 50%)"></i>
  <i style="left:88px;top:14px;width:58px;height:50px;background:#d0d5d9"></i><i style="left:101px;top:24px;width:8px;height:8px;background:#7fe05a;border-radius:2px"></i><i style="left:113px;top:24px;width:8px;height:8px;background:#f6c53b;border-radius:2px"></i><i style="left:125px;top:24px;width:8px;height:8px;background:#f5a53b;border-radius:2px"></i>
  <i style="left:165px;top:14px;width:58px;height:50px;background:#fff"></i><i style="left:172px;top:19px;width:44px;height:44px;background:#2a86e2;border-radius:50%"></i>
  <i style="left:242px;top:14px;width:58px;height:50px;background:#f03a3e;color:#fff;font:bold 15px/20px 'Liberation Sans','Noto Sans CJK SC',sans-serif;text-align:center;padding-top:3px">8月</i>
  <i style="left:315px;top:10px;width:65px;height:50px;background:#fff;border-radius:16px 16px 0 0"></i><i style="left:337px;top:22px;width:22px;height:22px;background:#27a6f5;border-radius:50%"></i>
  <i style="left:395px;top:14px;width:58px;height:50px;background:#fff"></i>
  <i style="left:471px;top:14px;width:58px;height:50px;background:#fff"></i>
  <i style="left:548px;top:14px;width:58px;height:50px;background:#fff"></i>
  <i style="left:624px;top:14px;width:58px;height:50px;background:#fff"></i>
  <i style="left:700px;top:14px;width:58px;height:58px;background:#35d058;border-radius:50%"></i>
  <b style="left:740px;top:6px">3</b>
  <i style="left:775px;top:8px;width:63px;height:63px;background:#fff;border-radius:50%"></i>
  <i style="left:854px;top:14px;width:58px;height:50px;background:#c5d3dc"></i>
  <b style="left:893px;top:6px">1</b>
  <i style="left:931px;top:14px;width:58px;height:50px;background:#1fdc5e"></i>
  <i style="left:1007px;top:14px;width:58px;height:50px;background:#fff"></i>
  <i style="left:1084px;top:14px;width:56px;height:50px;background:#1fdc5e"></i>
  <i style="left:1161px;top:14px;width:57px;height:50px;background:#1fdc5e"></i>
  <i style="left:1237px;top:14px;width:58px;height:50px;background:#0a0a0a;border:2px solid #cfeaf6"></i>
  <i style="left:1314px;top:14px;width:58px;height:50px;background:#8fb0ee;border:4px solid #eef0f3"></i>
  <i style="left:1383px;top:7px;width:73px;height:50px;background:#ea0016;border-radius:16px 16px 0 0"></i>
  <i style="left:1476px;top:12px;width:1.5px;height:40px;background:#2c3a46;border-radius:0"></i>
  <i style="left:1581px;top:15px;width:52px;height:40px;background:#cfd2d4;border-radius:10px 10px 0 0"></i>
</div>

</body></html>
